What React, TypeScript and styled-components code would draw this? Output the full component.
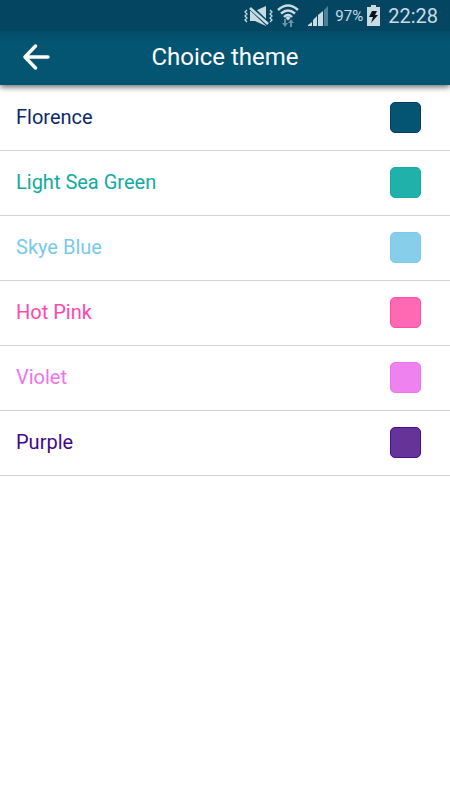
import React from "react";
import styled, { createGlobalStyle } from "styled-components";

const GlobalStyle = createGlobalStyle`
  *, *::before, *::after { box-sizing: border-box; }
  body {
    margin: 0;
    background: #ffffff;
    font-family: Roboto, "Liberation Sans", sans-serif;
  }
`;

const Page = styled.div`
  min-height: 100vh;
  background: #ffffff;
`;

const TopArea = styled.div`
  position: relative;
  box-shadow: 0 2px 6px rgba(0, 0, 0, 0.6);
`;

const StatusBar = styled.div`
  display: flex;
  align-items: center;
  justify-content: flex-end;
  height: 31px;
  padding-right: 12px;
  background: #044662;
  color: #c9dbe2;
`;

const StatusIcon = styled.svg<{ $gap: number }>`
  display: block;
  flex: none;
  margin-right: ${({ $gap }) => $gap}px;
`;

const BatteryLevel = styled.span`
  margin-right: 4px;
  font-size: 15px;
  line-height: 32px;
`;

const Clock = styled.time`
  font-size: 20px;
  line-height: 32px;
`;

const Header = styled.header`
  display: grid;
  grid-template-columns: 72px 1fr 72px;
  align-items: start;
  height: 54px;
  background: linear-gradient(#044d69, #045572 12px);
  color: #ffffff;
`;

const BackButton = styled.button`
  display: flex;
  align-items: center;
  justify-content: center;
  width: 72px;
  height: 52px;
  padding: 0;
  border: 0;
  background: none;
  color: inherit;
  cursor: pointer;
`;

const Title = styled.h1`
  margin: 0;
  font-size: 24px;
  font-weight: 400;
  line-height: 52px;
  text-align: center;
`;

const ThemeList = styled.ul`
  margin: 0;
  padding: 1px 0 0;
  list-style: none;
`;

const ThemeItem = styled.li`
  border-bottom: 1px solid #d3d3d3;
`;

const ThemeButton = styled.button<{ $text: string }>`
  display: flex;
  align-items: flex-start;
  justify-content: space-between;
  width: 100%;
  padding: 16px 29px 17px 16px;
  border: 0;
  background: none;
  color: ${({ $text }) => $text};
  font: inherit;
  font-size: 20px;
  line-height: 30px;
  text-align: left;
  cursor: pointer;
`;

const Swatch = styled.span<{ $fill: string; $edge: string }>`
  flex: none;
  width: 31px;
  height: 31px;
  border: 1px solid ${({ $edge }) => $edge};
  border-radius: 5px;
  background: ${({ $fill }) => $fill};
`;

const themes = [
  { name: "Florence", text: "#0b2a68", fill: "#045572", edge: "#0a3a6c" },
  { name: "Light Sea Green", text: "#12aaa2", fill: "#20b2aa", edge: "#14aea4" },
  { name: "Skye Blue", text: "#79c9ea", fill: "#87ceeb", edge: "#79caec" },
  { name: "Hot Pink", text: "#ff48ac", fill: "#ff69b4", edge: "#ff4fae" },
  { name: "Violet", text: "#ee74ee", fill: "#ee82ee", edge: "#ee74ee" },
  { name: "Purple", text: "#430a8c", fill: "#663399", edge: "#480f90" },
];

const VibrateMuted = () => (
  <StatusIcon $gap={4} width="29" height="20" viewBox="0 0 29 20" fill="none" aria-label="Muted">
    <path d="M3 4 1 6l2 2-2 2 2 2-2 2 2 2M26 4l2 2-2 2 2 2-2 2 2 2-2 2" stroke="#c9dbe2" strokeWidth="1.3" />
    <path d="M6 5h5l11-5v20l-11-5H6z" fill="#c9dbe2" />
    <path d="M5 0 25 19" stroke="#044662" strokeWidth="5" />
    <path d="M6 2 24 18" stroke="#c9dbe2" strokeWidth="2.6" />
  </StatusIcon>
);

const Wifi = () => (
  <StatusIcon $gap={9} width="22" height="24" viewBox="0 0 22 24" fill="none" aria-label="Wi-Fi">
    <path d="M1 6Q11-3 21 6M4 9.500q7-6 14 0M7 13q4-4 8 0" stroke="#c9dbe2" strokeWidth="2.4" />
    <path d="m8.500 14 2.500-2 2.500 2-2.500 2.500z" fill="#c9dbe2" />
    <path d="M7 15h2v4h2l-3 4-3-4h2zM13 23h2v-4h2l-3-4-3 4h2z" fill="#6792a4" />
  </StatusIcon>
);

const Signal = () => (
  <StatusIcon $gap={7} width="20" height="20" viewBox="0 0 20 20" aria-label="Signal">
    <path d="M0 20v-1l4-3v4zM5 20v-6l4-4v10zM10 20V9l5-4v15z" fill="#c9dbe2" />
    <path d="M16 20V4l4-4v20z" fill="#4f8196" />
  </StatusIcon>
);

const Battery = () => (
  <StatusIcon $gap={8} width="13" height="21" viewBox="0 0 13 21" aria-label="Battery charging">
    <path d="M4 0h5v2h4v19H0V2h4z" fill="#c9dbe2" />
    <path d="M5 6h5l-2 4h3l-7 8 2-6H2z" fill="#07131d" />
  </StatusIcon>
);

const BackArrow = () => (
  <svg width="28" height="26" viewBox="0 0 28 26" fill="none" aria-hidden="true">
    <path d="M13.500 2 3 13l10.500 11M3 13h23" stroke="currentColor" strokeWidth="3.400" strokeLinecap="round" strokeLinejoin="round" />
  </svg>
);

export default function App() {
  return (
    <Page>
      <GlobalStyle />
      <TopArea>
        <StatusBar>
          <VibrateMuted />
          <Wifi />
          <Signal />
          <BatteryLevel>97%</BatteryLevel>
          <Battery />
          <Clock>22:28</Clock>
        </StatusBar>
        <Header>
          <BackButton type="button" aria-label="Back">
            <BackArrow />
          </BackButton>
          <Title>Choice theme</Title>
        </Header>
      </TopArea>
      <main>
        <ThemeList>
          {themes.map(({ name, text, fill, edge }) => (
            <ThemeItem key={name}>
              <ThemeButton type="button" $text={text}>
                {name}
                <Swatch $fill={fill} $edge={edge} />
              </ThemeButton>
            </ThemeItem>
          ))}
        </ThemeList>
      </main>
    </Page>
  );
}
